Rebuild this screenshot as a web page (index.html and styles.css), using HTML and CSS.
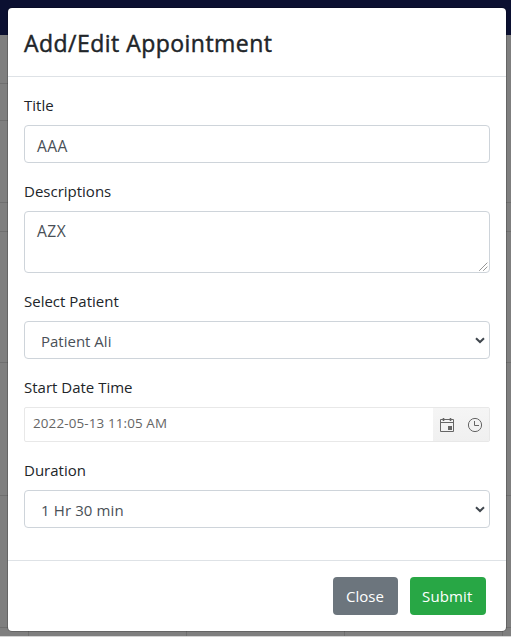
FILE: index.html
```html
<!DOCTYPE html>
<html lang="en">
<head>
<meta charset="utf-8">
<title>Add/Edit Appointment</title>
<link rel="stylesheet" href="styles.css">
</head>
<body>
<div class="page">
  <div class="navbar"></div>
  <div class="row toolbar"></div>
  <div class="row filters"></div>
  <div class="row heading-row"></div>
  <div class="row days"></div>
  <div class="row week"></div>
  <div class="row week"></div>
  <div class="row last-week"></div>
  <div class="cells"><i></i><i></i><i></i><i></i><i></i></div>
  <div class="page-end"></div>
</div>
<div class="modal" role="dialog" aria-labelledby="heading">
  <header class="modal-header"><h1 id="heading">Add/Edit Appointment</h1></header>
  <div class="modal-body">
    <div class="group">
      <label>Title</label>
      <div class="control caps">AAA</div>
    </div>
    <div class="group">
      <label>Descriptions</label>
      <div class="control area caps">AZX
        <svg class="grip" width="9" height="9" viewBox="0 0 9 9"><path d="M.5 8.5l8-8M4.5 8.5l4-4"/></svg>
      </div>
    </div>
    <div class="group">
      <label>Select Patient</label>
      <div class="control select">Patient Ali
        <svg class="arrow" width="10" height="7" viewBox="0 0 10 7"><path d="M1 1.2l4 3.8 4-3.8"/></svg>
      </div>
    </div>
    <div class="group">
      <label>Start Date Time</label>
      <div class="picker">
        <div class="date">2022-05-13 11:05 AM</div>
        <div class="picker-icons">
          <svg width="16" height="16" viewBox="0 0 16 16"><path class="line" d="M1.5 2.5h13v12h-13zM1.5 5.5h13"/><path class="line thick" d="M4.5 1v3M11.5 1v3"/><path class="solid" d="M9 9h4v4H9z"/></svg>
          <svg width="16" height="16" viewBox="0 0 16 16"><circle class="line" cx="8" cy="8" r="6.6"/><path class="line" d="M7.5 4v4.5H12"/></svg>
        </div>
      </div>
    </div>
    <div class="group">
      <label>Duration</label>
      <div class="control select duration">1 Hr 30 min
        <svg class="arrow" width="10" height="7" viewBox="0 0 10 7"><path d="M1 1.2l4 3.8 4-3.8"/></svg>
      </div>
    </div>
  </div>
  <footer class="modal-footer">
    <button class="btn close">Close</button>
    <button class="btn submit">Submit</button>
  </footer>
</div>
</body>
</html>
```
FILE: styles.css
```css
* { box-sizing: border-box; }
body {
  margin: 0;
  height: 637px;
  overflow: hidden;
  position: relative;
  font-family: "Open Sans", "Noto Sans", sans-serif;
  font-size: 15px;
  line-height: 24px;
  color: #212529;
}
.page { height: 637px; display: flex; flex-direction: column; background: #7f7f7f; }
.navbar { height: 35px; background: #0b1031; }
.row { border-bottom: 1px solid #6f6f6f; }
.toolbar { height: 49px; width: 50%; }
.filters { height: 37px; width: 50%; }
.heading-row { height: 82px; }
.days { height: 29px; }
.week { height: 131px; }
.week + .week { height: 133px; }
.last-week { height: 132px; }
.cells { flex: 1; display: grid; grid-template-columns: 29px 158px 158px 158px 1fr; }
.cells i { border-right: 1px solid #6f6f6f; }
.cells i:last-child { border: 0; }
.page-end { height: 1px; background: #d4d4d4; }

.modal {
  position: absolute;
  top: 7px;
  left: 7px;
  width: 500px;
  height: 625px;
  display: flex;
  flex-direction: column;
  background: #fff;
  background-clip: padding-box;
  border: 1px solid rgba(0, 0, 0, .2);
  border-radius: 5px;
}
.modal-header { height: 69px; padding: 17px 16px; border-bottom: 1px solid #dee2e6; }
h1 { margin: 0; font-size: 23px; line-height: 36px; font-weight: 400; letter-spacing: .47px; -webkit-text-stroke: .45px #212529; white-space: nowrap; }
.modal-body { flex: 1; padding: 16px; }
.group { margin-bottom: 16px; }
label { display: block; height: 24px; margin-bottom: 8px; }
.control {
  position: relative;
  height: 38px;
  padding: 7px 12px;
  border: 1px solid #ced4da;
  border-radius: 4px;
  color: #495057;
}
.caps { font-size: 15.6px; letter-spacing: .45px; padding-top: 8px; }
.area { height: 62px; padding-top: 7px; }
.select { padding-left: 16px; }
.duration { letter-spacing: .12px; }
.grip { position: absolute; right: 1px; bottom: 1px; }
.grip path { stroke: #444; stroke-width: .9; stroke-dasharray: 1 .4; fill: none; }
.arrow { position: absolute; right: 4px; top: 15px; }
.arrow path { stroke: #3f464d; stroke-width: 2; fill: none; }
.picker { display: flex; height: 35px; border: 1px solid #e8e8e8; border-radius: 2px; }
.date { flex: 1; padding: 3px 8px; font-size: 13.4px; letter-spacing: .14px; color: #656565; }
.picker-icons {
  display: flex;
  align-items: center;
  gap: 12px;
  width: 56px;
  padding-left: 6px;
  background: linear-gradient(#f5f5f5, #f0f0f0);
}
.line { fill: none; stroke: #656565; stroke-width: 1; }
.thick { stroke-width: 1.6; }
.solid { fill: #656565; }
.modal-footer {
  height: 71px;
  padding: 16px 20px;
  display: flex;
  justify-content: flex-end;
  gap: 12px;
  border-top: 1px solid #dee2e6;
}
.btn {
  height: 38px;
  padding: 0 12px;
  border: 0;
  border-radius: 4px;
  color: #fff;
  font: inherit;
  text-align: left;
}
.close { width: 65px; padding-left: 13px; background: #6c757d; }
.submit { width: 76px; letter-spacing: .15px; background: #28a745; }
```
